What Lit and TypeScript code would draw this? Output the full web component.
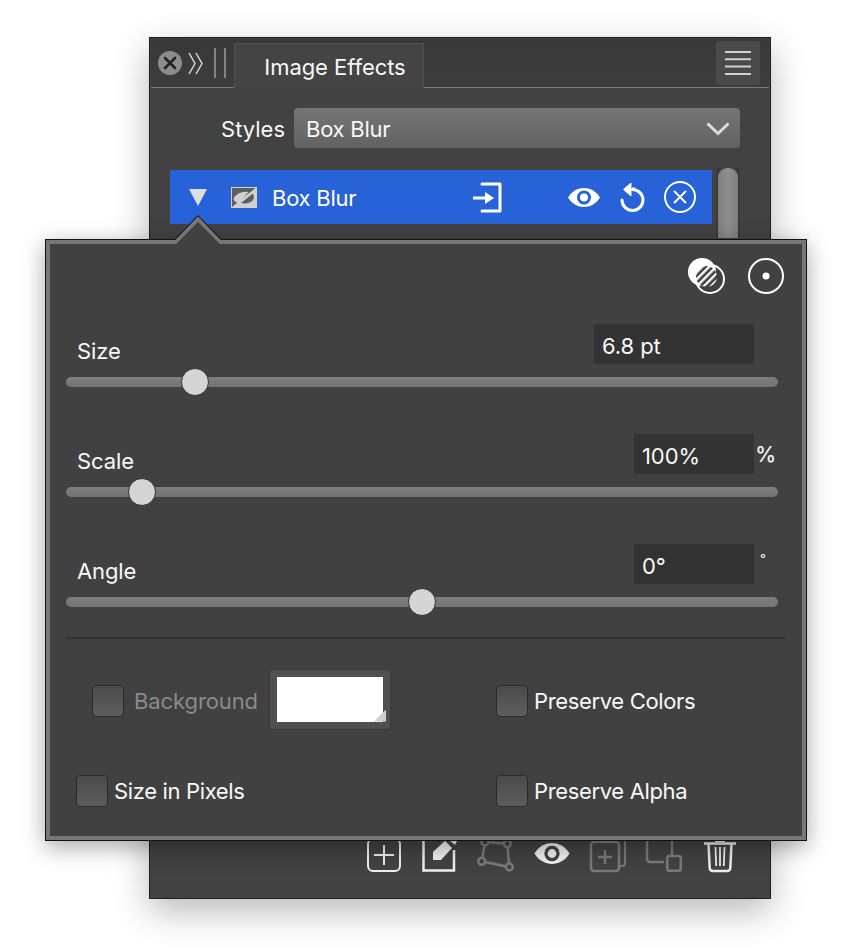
import { LitElement, html, css, svg } from "lit";
import { customElement } from "lit/decorators.js";

const I = {
  close: svg`<circle cx="12" cy="12" r="12" fill="#8c8c8c"/><path d="M7 7l10 10M17 7L7 17" stroke="#222" stroke-width="2.6" stroke-linecap="round"/>`,
  chev: svg`<path d="M1 1l6 10.5L1 22M8 1l6 10.5L8 22" fill="none" stroke="#d8d8d8" stroke-width="1.5"/>`,
  grip: svg`<path d="M1 0v30M11 0v30" stroke="#858585" stroke-width="2"/>`,
  burger: svg`<path d="M0 1h26M0 8.3h26M0 15.6h26M0 23h26" stroke="#cfcfcf" stroke-width="2"/>`,
  down: svg`<path d="M1.500 1.500L12 11.500 22.500 1.500" fill="none" stroke="#ddd" stroke-width="3"/>`,
  tri: svg`<path d="M0 0h18l-9 17z" fill="#dedede"/>`,
  blur: svg`<defs><clipPath id="ul"><path d="M0 0h26L0 21z"/></clipPath></defs>
    <rect x=".5" y=".5" width="25" height="20" fill="#d0d0d0" stroke="#d0d0d0"/>
    <path d="M1 1h23.500L1 20z" fill="#5e5e5e"/>
    <g transform="rotate(-12 13 10.500)"><ellipse cx="13" cy="10.500" rx="10.500" ry="5.500" fill="#d0d0d0" clip-path="url(#ul)"/></g>
    <path d="M13.500 16.500c5 0 9-2.500 9.500-6 .2-1.400-.4-2.800-1.500-3.800L10 16z" fill="#5e5e5e"/>`,
  exit: svg`<path d="M9 2h18v27H9" fill="none" stroke="#fff" stroke-width="3" stroke-linejoin="round" stroke-linecap="round"/><path d="M0 16h13" stroke="#fff" stroke-width="3"/><path d="M12 10l9 6-9 6z" fill="#fff"/>`,
  eye: svg`<path d="M0 10.500C4 4 10 1 16 1s12 3 16 9.500C28 17 22 20 16 20S4 17 0 10.500z" fill="currentColor"/><circle cx="16" cy="10.500" r="7" fill="var(--eye-bg)"/><circle cx="16" cy="10.500" r="4" fill="currentColor"/>`,
  undo: svg`<path d="M12.500 6.500A10.500 10.500 0 1 1 2 17" fill="none" stroke="#fff" stroke-width="3" stroke-linecap="round"/><path d="M11 0L3.500 6.500 11 13z" fill="#fff" stroke="#fff" stroke-linejoin="round"/><path d="M12 6h3" stroke="#fff" stroke-width="3"/>`,
  xc: svg`<circle cx="16" cy="16" r="15" fill="none" stroke="#fff" stroke-width="2"/><path d="M10 10l12 12M22 10L10 22" stroke="#fff" stroke-width="2"/>`,
  blend: svg`<defs><pattern id="st" width="5" height="5" patternUnits="userSpaceOnUse" patternTransform="rotate(-45)"><rect width="5" height="2.400" fill="#fff"/><rect y="2.400" width="5" height="2.600" fill="#3c3c3c"/></pattern></defs><circle cx="14" cy="14" r="14" fill="#fff"/><circle cx="22" cy="21" r="14" fill="none" stroke="#fff" stroke-width="2"/><circle cx="18.500" cy="18.500" r="10.500" fill="url(#st)"/>`,
  dot: svg`<circle cx="18" cy="18" r="17" fill="none" stroke="#fff" stroke-width="2"/><circle cx="18" cy="18" r="3.500" fill="#fff"/>`,
  plus: svg`<rect x="1" y="1" width="32" height="32" rx="5" fill="none" stroke="#eee" stroke-width="2"/><path d="M17 7v20M7 17h20" stroke="#eee" stroke-width="2"/>`,
  edit: svg`<path d="M24 1H1.500v31.500H32V12" fill="none" stroke="#eee" stroke-width="2.500"/><path d="M11 22V14L23 2.700 30 10 19 22z" fill="#eee"/><path d="M26 1l4-2 5 4-2 4z" fill="#eee"/>`,
  poly: svg`<path d="M3.700 25.300L7 6l22.300 1.700 2 23.300z" fill="none" stroke="#7a7a7a" stroke-width="2.500"/><g fill="#414141" stroke="#7a7a7a" stroke-width="2.500"><circle cx="7" cy="6" r="3.500"/><circle cx="29.300" cy="7.700" r="3.500"/><circle cx="3.700" cy="25.300" r="3.500"/><circle cx="31.300" cy="31" r="3.500"/></g>`,
  addc: svg`<rect x="1" y="4" width="28" height="29" rx="3" fill="none" stroke="#7a7a7a" stroke-width="2.500"/><path d="M15 12v14M8 19h14" stroke="#7a7a7a" stroke-width="2.500"/><path d="M29 28h3a3 3 0 0 0 3-3V0" fill="none" stroke="#7a7a7a" stroke-width="2"/><path d="M6 4V1" stroke="#7a7a7a" stroke-width="2"/>`,
  shape: svg`<path d="M1 0v19a3 3 0 0 0 3 3h14M26 0v15" fill="none" stroke="#7a7a7a" stroke-width="2.500"/><rect x="21.250" y="16" width="13.500" height="14.750" rx="2" fill="none" stroke="#7a7a7a" stroke-width="2.500"/>`,
  trash: svg`<path d="M0 5.500h32" stroke="#eee" stroke-width="2.500"/><path d="M4.500 6l1.200 24a3 3 0 0 0 3 3h14.600a3 3 0 0 0 3-3L27.500 6" fill="none" stroke="#eee" stroke-width="2.500"/><path d="M11.500 9l.7 19M16 9v19M20.500 9l-.7 19" stroke="#eee" stroke-width="1.800"/><path d="M11 3h10" stroke="#eee" stroke-width="2"/>`,
};

const icon = (name: keyof typeof I, w: number, h: number, cls = "", vb = "") =>
  html`<svg class=${cls} width=${w} height=${h} viewBox=${vb || `0 0 ${w} ${h}`}>${I[name]}</svg>`;

@customElement("app-root")
export class AppRoot extends LitElement {
  static styles = css`
    :host {
      display: block;
      position: relative;
      width: 852px;
      height: 952px;
      overflow: hidden;
      background: #fff;
      font-family: Inter, "Noto Sans", sans-serif;
      font-size: 22px;
      color: #f8f8f8;
      box-sizing: border-box;
      padding: 37px 0 0 149px;
    }
    * { box-sizing: border-box; }
    svg { display: block; flex: none; overflow: visible; }
    .panel {
      width: 622px;
      height: 862px;
      background: #424242;
      border: 1px solid #1d1d1d;
      box-shadow: 0 12px 34px rgba(0,0,0,.28);
      position: relative;
      display: flex;
      flex-direction: column;
    }
    .tabbar {
      height: 49px;
      margin: 1px 1px 0;
      background: linear-gradient(#383838, #3d3d3d);
      border-bottom: 1px solid #7a7a7a;
      display: flex;
      align-items: center;
      padding: 0 9px 0 7px;
    }
    .chev { margin-left: 6px; margin-right: 11px; }
    .tab {
      align-self: flex-end;
      margin-left: 8px;
      margin-bottom: -1px;
      height: 45px;
      width: 190px;
      background: #444;
      border: 1px solid #525252;
      border-bottom: none;
      text-align: center;
      line-height: 46px;
      padding-left: 12px;
      letter-spacing: -.05px;
    }
    .burger {
      margin-left: auto;
      width: 44px;
      height: 44px;
      background: #4a4a4a;
      border-radius: 3px;
      display: flex;
      align-items: center;
      justify-content: center;
    }
    .styles {
      margin: 20px 30px 0 0;
      display: flex;
      align-items: center;
      justify-content: flex-end;
      gap: 9px;
    }
    .styles .l { margin-top: 2px; }
    .select {
      width: 446px;
      height: 40px;
      border-radius: 4px;
      background: linear-gradient(#757575, #626262);
      padding: 2px 10px 0 12px;
      display: flex;
      align-items: center;
      justify-content: space-between;
      letter-spacing: -.25px;
    }
    .select svg { margin-top: -2px; }
    .list {
      margin: 20px 30px 0 20px;
      display: flex;
      gap: 4px;
      height: 70px;
    }
    .row {
      margin-top: 2px;
      width: 542px;
      height: 54px;
      background: #2762d8;
      color: #fff;
      display: flex;
      align-items: center;
      --eye-bg: #2762d8;
      padding-left: 19px;
      letter-spacing: -.25px;
    }
    .row .t { margin: 2px 0 0 15px; }
    .row .b { margin-left: 24px; }
    .row .exit { margin-left: 117px; }
    .row .eye { margin-left: 66px; }
    .row .undo { margin-left: 20px; }
    .row .xc { margin-left: 19px; }
    .track {
      width: 24px;
      background: #3a3a3a;
      padding: 0 2px;
    }
    .thumb {
      height: 100%;
      border-radius: 9px 9px 0 0;
      background: linear-gradient(90deg, #7e7e7e, #8e8e8e 50%, #7e7e7e);
    }
    .toolbar {
      position: absolute;
      left: 217px;
      bottom: 26px;
      display: flex;
      align-items: flex-end;
      color: #eee;
      --eye-bg: #424242;
    }
    .pop {
      position: absolute;
      left: 45px;
      top: 239px;
      width: 762px;
      height: 602px;
      background: #414141;
      border: 1px solid #111;
      box-shadow: inset 0 0 0 4px #777, 0 6px 22px rgba(0,0,0,.35);
      padding: 5px;
    }
    .arrow { position: absolute; left: 126px; top: -26px; }
    .top {
      display: flex;
      justify-content: flex-end;
      align-items: center;
      gap: 24px;
      margin: 12px 17px 0 0;
      height: 38px;
    }
    .sliders { margin: 0 23px 0 15px; display: flex; flex-direction: column; }
    .field { height: 110px; position: relative; }
    .sliders .field:first-child { margin-top: 29px; }
    .labelrow {
      height: 40px;
      display: flex;
      align-items: flex-end;
      padding-left: 11px;
      position: relative;
    }
    .labelrow .lab { line-height: 24px; margin-bottom: 1px; letter-spacing: -.1px; }
    .input {
      position: absolute;
      top: 0;
      right: 24px;
      width: 120px;
      height: 40px;
      background: #333;
      padding-left: 8px;
      line-height: 44px;
      letter-spacing: -.1px;
    }
    .input.w { width: 160px; }
    .unit {
      position: absolute;
      right: 2px;
      top: 8px;
      font-size: 21px;
      font-weight: 500;
    }
    .unit.deg { right: 12px; top: 7px; font-size: 13px; }
    .slider {
      margin-top: 13px;
      height: 10px;
      width: 712px;
      border-radius: 5px;
      background: linear-gradient(#7e7e7e, #737373);
      position: relative;
    }
    .knob {
      position: absolute;
      top: 50%;
      width: 28px;
      height: 28px;
      margin: -14px 0 0 -14px;
      border-radius: 50%;
      background: #d5d5d5;
      border: 1px solid #333;
    }
    .divider {
      height: 2px;
      margin: -17px 15px 0;
      background: #323232;
    }
    .opts {
      display: grid;
      grid-template-columns: 420px 1fr;
      margin: 32px 0 0 25px;
      grid-auto-rows: 60px;
      row-gap: 30px;
    }
    .opt { display: flex; align-items: center; gap: 6px; letter-spacing: -.35px; }
    .opt.ind { padding-left: 16px; gap: 10px; letter-spacing: -.1px; }
    .opt.dim { color: #8a8a8a; }
    .cb {
      width: 32px;
      height: 32px;
      border-radius: 4px;
      background: linear-gradient(#4b4b4b, #5d5d5d);
      border: 1px solid #2a2a2a;
      flex: none;
    }
    .well {
      width: 120px;
      height: 59px;
      margin: 0 0 4px 2px;
      background: #505050;
      border-radius: 3px;
      padding: 7px;
      position: relative;
      box-shadow: 0 0 0 1px #3a3a3a;
    }
    .well i {
      display: block;
      width: 106px;
      height: 45px;
      background: #fff;
    }
    .well b {
      position: absolute;
      right: 4px;
      bottom: 7px;
      width: 12px;
      height: 12px;
      background: #cfcfcf;
      clip-path: polygon(100% 0, 100% 100%, 0 100%);
    }
  `;

  private field(label: string, value: string, pos: number, wide: boolean, unit: string) {
    return html`<div class="field">
      <div class="labelrow">
        <span class="lab">${label}</span>
        <div class="input ${wide ? "w" : ""}">${value}</div>
        ${unit ? html`<span class="unit ${unit === "°" ? "deg" : ""}">${unit}</span>` : ""}
      </div>
      <div class="slider"><div class="knob" style="left:${pos}px"></div></div>
    </div>`;
  }

  private tool(n: keyof typeof I, w: number, h: number, ml: number, mb = 0, vb = "") {
    return html`<span style="margin-left:${ml}px;margin-bottom:${mb}px">${icon(n, w, h, "", vb)}</span>`;
  }

  render() {
    return html`
      <div class="panel">
        <div class="tabbar">
          ${icon("close", 24, 24)}
          ${icon("chev", 15, 23, "chev")}
          ${icon("grip", 12, 30)}
          <div class="tab">Image Effects</div>
          <div class="burger">${icon("burger", 26, 24)}</div>
        </div>
        <div class="styles">
          <span class="l">Styles</span>
          <div class="select"><span>Box Blur</span>${icon("down", 24, 13)}</div>
        </div>
        <div class="list">
          <div class="row">
            ${icon("tri", 18, 17)}
            <span class="b">${icon("blur", 26, 21)}</span>
            <span class="t">Box Blur</span>
            <span class="exit">${icon("exit", 29, 31)}</span>
            <span class="eye">${icon("eye", 32, 21)}</span>
            <span class="undo">${icon("undo", 25, 29)}</span>
            <span class="xc">${icon("xc", 32, 32)}</span>
          </div>
          <div class="track"><div class="thumb"></div></div>
        </div>
        <div class="toolbar">
          ${this.tool("plus", 34, 34, 0)}
          ${this.tool("edit", 34, 34, 21)}
          ${this.tool("poly", 38, 36, 22)}
          ${this.tool("eye", 36, 23, 18, 7, "0 0 32 21")}
          ${this.tool("addc", 36, 34, 20)}
          ${this.tool("shape", 36, 32, 20)}
          ${this.tool("trash", 32, 34, 22)}
        </div>
      </div>
      <div class="pop">
        <svg class="arrow" width="52" height="31" viewBox="0 0 52 31">
          <path d="M26 1.500L3 25.500V31h46v-5.500z" fill="#414141"/>
          <path d="M3.500 26L26 2.500 48.500 26H52v4h-4L26 8 4 30H0v-4z" fill="#777"/>
          <path d="M0 25.500h3L26 1.500l23 24h3" fill="none" stroke="#111"/>
        </svg>
        <div class="top">${icon("blend", 36, 36)}${icon("dot", 36, 36)}</div>
        <div class="sliders">
          ${this.field("Size", "6.8 pt", 129.3, true, "")}
          ${this.field("Scale", "100%", 76.2, false, "%")}
          ${this.field("Angle", "0°", 356, false, "°")}
        </div>
        <div class="divider"></div>
        <div class="opts">
          <div class="opt ind dim"><span class="cb"></span><span>Background</span>
            <span class="well"><i></i><b></b></span></div>
          <div class="opt"><span class="cb"></span><span>Preserve Colors</span></div>
          <div class="opt"><span class="cb"></span><span>Size in Pixels</span></div>
          <div class="opt"><span class="cb"></span><span>Preserve Alpha</span></div>
        </div>
      </div>
    `;
  }
}
